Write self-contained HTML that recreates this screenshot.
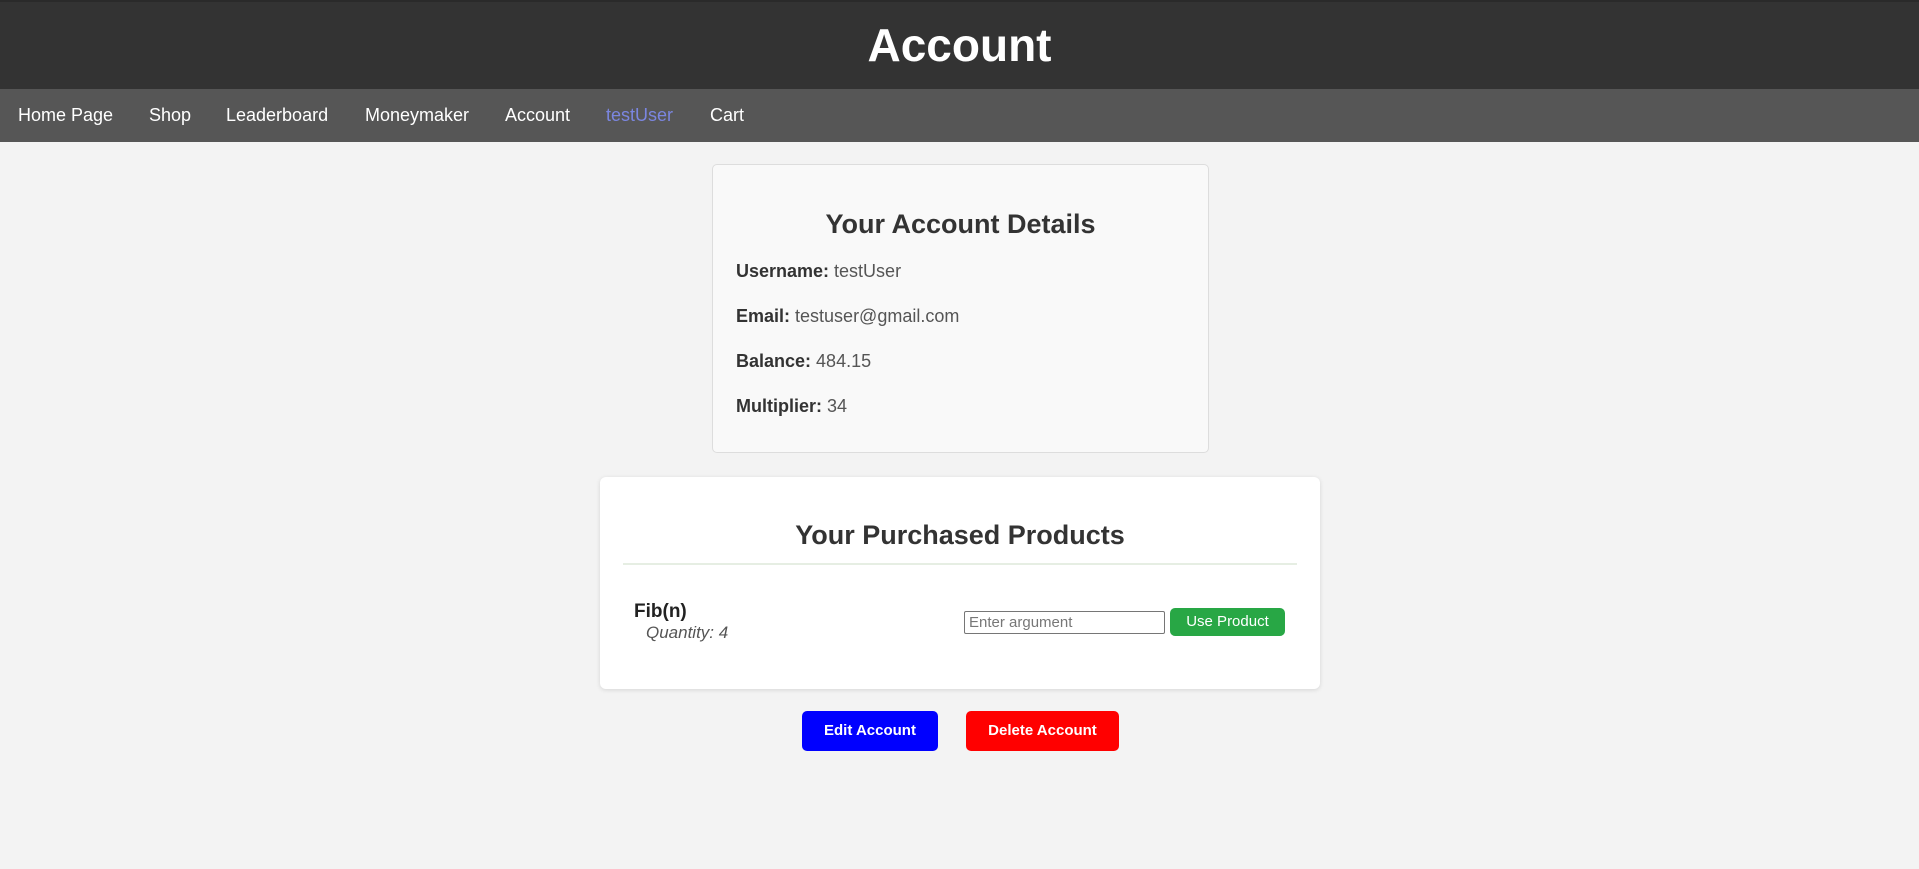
<!DOCTYPE html>
<html><head><meta charset="utf-8"><style>
*{box-sizing:border-box;margin:0;padding:0}
body{width:1919px;height:869px;background:#f3f3f3;font-family:"Liberation Sans",Arial,sans-serif;position:relative;overflow:hidden}
.hdr{position:absolute;left:0;top:0;width:1919px;height:89px;background:#333;border-top:2px solid #2a2a2a}
.hdr h1{color:#fff;font-size:46px;text-align:center;line-height:86px;font-weight:bold}
.nav{position:absolute;left:0;top:89px;width:1919px;height:53px;background:#565656}
.nav span{position:absolute;top:0;line-height:53px;color:#fff;font-size:18px}
.c1{position:absolute;left:712px;top:164px;width:497px;height:289px;background:#f9f9f9;border:1px solid #ddd;border-radius:5px}
.c2{position:absolute;left:600px;top:477px;width:720px;height:212px;background:#fff;border-radius:6px;box-shadow:0 1px 5px rgba(0,0,0,.12)}
h2{position:absolute;left:0;width:100%;text-align:center;font-size:27px;color:#333;font-weight:bold}
.row{position:absolute;left:23px;font-size:18px;color:#555}
.row b{color:#333}
.t{position:absolute}
</style></head><body>
<div class="hdr"><h1>Account</h1></div>
<div class="nav">
<span style="left:18px">Home Page</span>
<span style="left:149px">Shop</span>
<span style="left:226px">Leaderboard</span>
<span style="left:365px">Moneymaker</span>
<span style="left:505px">Account</span>
<span style="left:606px;color:#7b86e0">testUser</span>
<span style="left:710px">Cart</span>
</div>
<div class="c1">
<h2 style="top:44px">Your Account Details</h2>
<div class="row" style="top:96px"><b>Username:</b> testUser</div>
<div class="row" style="top:141px"><b>Email:</b> testuser@gmail.com</div>
<div class="row" style="top:186px"><b>Balance:</b> 484.15</div>
<div class="row" style="top:231px"><b>Multiplier:</b> 34</div>
</div>
<div class="c2">
<h2 style="top:43px">Your Purchased Products</h2>
<div class="t" style="left:23px;top:86px;width:674px;height:2px;background:#e6eee3"></div>
<div class="t" style="left:34px;top:124px;font-size:19px;font-weight:bold;color:#222">Fib(n)</div>
<div class="t" style="left:46px;top:146px;font-size:17px;font-style:italic;color:#555">Quantity: 4</div>
<div class="t" style="left:364px;top:134px;width:201px;height:23px;border:1px solid #767676;border-radius:2px;font-size:15px;color:#777;padding:1px 4px;line-height:19px">Enter argument</div>
<div class="t" style="left:570px;top:131px;width:115px;height:28px;background:#28a745;border-radius:5px;color:#fff;font-size:15px;text-align:center;line-height:28px">Use Product</div>
</div>
<div class="t" style="left:802px;top:711px;width:136px;height:40px;background:#0000ff;border-radius:5px;color:#fff;font-size:15px;font-weight:bold;text-align:center;line-height:40px">Edit Account</div>
<div class="t" style="left:966px;top:711px;width:153px;height:40px;background:#ff0000;border-radius:5px;color:#fff;font-size:15px;font-weight:bold;text-align:center;line-height:40px">Delete Account</div>
</body></html>
